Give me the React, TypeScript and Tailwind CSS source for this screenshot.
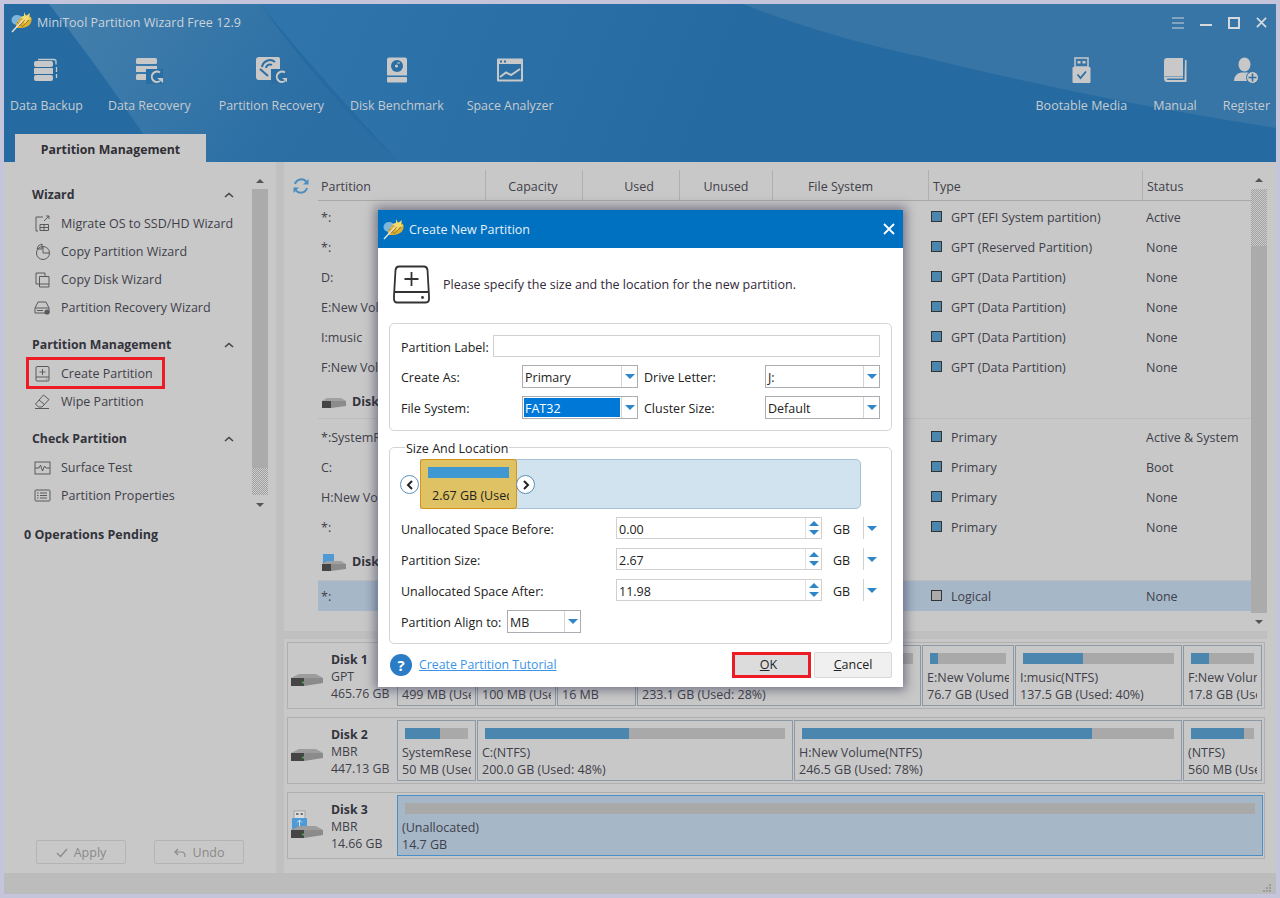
import React from "react";

const G = "#c8c8c8";

function Logo({ s = 22 }: { s?: number }) {
  return (
    <svg width={s} height={s} viewBox="0 0 22 22" className="shrink-0">
      <ellipse cx="6" cy="9" rx="5.5" ry="5" fill="#7cb6dc" />
      <path d="M5 17 C4 11 9 7 14 4 L20 6 C22 12 18 16 11 17 Z" fill="#dcae32" />
      <path d="M13 1 L15 5 L19 2 L18 7 L21 8 L16 9 L14 13 L12 8 L9 6 L13 5 Z" fill="#f2dc70" />
      <path d="M8 15 L14 9 M12 15 L18 9 M6 11 L12 16" stroke="#94721c" strokeWidth="0.8" />
      <path d="M1 21 L12 9" stroke="#e4e4dc" strokeWidth="1.4" />
    </svg>
  );
}

const refreshArrow = (x: number, y: number) => (
  <g>
    <path d={`M${x + 6} ${y - 4.5} A5.2 5.2 0 1 0 ${x + 6} ${y + 4}`} fill="none" stroke={G} strokeWidth="2" />
    <path d={`M${x + 3} ${y + 1} h6 v5 z`} fill={G} />
  </g>
);

const toolIcons: Record<string, React.ReactNode> = {
  backup: (
    <svg width="26" height="26" viewBox="0 0 26 26">
      <rect x="1" y="4" width="19" height="6" rx="2" fill={G} />
      <rect x="1" y="11" width="19" height="6" rx="0.5" fill={G} />
      <rect x="1" y="18" width="19" height="6" rx="2" fill={G} />
      <path d="M5 2.5 h16 q2 0 2 2 v3 M23.5 10 v5 M23.5 17 v4" fill="none" stroke={G} strokeWidth="1.3" />
    </svg>
  ),
  recovery: (
    <svg width="28" height="28" viewBox="0 0 28 28">
      <rect x="1" y="2" width="21" height="6" rx="1.5" fill={G} />
      <rect x="1" y="10" width="21" height="6" fill={G} />
      <rect x="1" y="18" width="21" height="6" rx="1.5" fill={G} />
      <rect x="11" y="13" width="17" height="15" fill="#2b6ea4" />
      {refreshArrow(19, 21)}
    </svg>
  ),
  partition: (
    <svg width="32" height="28" viewBox="0 0 32 28">
      <path d="M4 1 h19 q2 0 2 2 v21 h-21 q-3 0 -3 -3 v-17 q0 -3 3 -3z" fill={G} />
      <path d="M7 11 A8 8 0 0 1 20 6" fill="none" stroke="#2b6ea4" strokeWidth="2" />
      <path d="M11 12 A4 4 0 0 1 17 9" fill="none" stroke="#2b6ea4" strokeWidth="2" />
      <path d="M5 13 l8 7" stroke="#2b6ea4" strokeWidth="2" />
      <rect x="16" y="13" width="16" height="15" fill="#2b6ea4" />
      {refreshArrow(24, 21)}
    </svg>
  ),
  benchmark: (
    <svg width="20" height="26" viewBox="0 0 20 26">
      <path d="M2 0.5 h16 q2 0 2 2 v16 h-20 v-16 q0 -2 2 -2z" fill={G} />
      <circle cx="10" cy="9" r="6" fill="#2b6ea4" />
      <circle cx="9.5" cy="9" r="1.6" fill={G} />
      <path d="M10 6 l3 0" stroke={G} strokeWidth="1" />
      <rect x="0" y="20" width="20" height="5.5" rx="1" fill={G} />
    </svg>
  ),
  space: (
    <svg width="26" height="24" viewBox="0 0 26 24">
      <rect x="0" y="0.5" width="26" height="23" rx="1" fill={G} />
      <rect x="2" y="6" width="22" height="15.5" fill="#2b6ea4" />
      <rect x="3" y="2.5" width="2" height="2" fill="#2b6ea4" />
      <rect x="7" y="2.5" width="2" height="2" fill="#2b6ea4" />
      <path d="M3 19 L9 14.5 L14 17 L23 11" fill="none" stroke={G} strokeWidth="2" />
    </svg>
  ),
  boot: (
    <svg width="19" height="27" viewBox="0 0 19 27">
      <path d="M3 1 h13 v9 h-13 z" fill="none" stroke={G} strokeWidth="1.5" />
      <rect x="5.5" y="4" width="3" height="2.5" fill={G} />
      <rect x="10.5" y="4" width="3" height="2.5" fill={G} />
      <rect x="0.5" y="10" width="18" height="16" rx="1" fill={G} />
      <path d="M5.5 17.5 L8.5 21 L14 14.5" fill="none" stroke="#2b6ea4" strokeWidth="1.8" />
    </svg>
  ),
  manual: (
    <svg width="24" height="26" viewBox="0 0 24 26">
      <path d="M4 1 H20 V19 H4 Q1 19 1 21 V4 Q1 1 4 1Z" fill={G} />
      <path d="M22 3 h1.5 v22 H4 Q1 25 1 21 Q1 19.5 4 19.5 H20 V21.5 H5 Q3.5 21.5 3.5 22.3 Q3.5 23 5 23 H21.5 Z" fill={G} />
    </svg>
  ),
  register: (
    <svg width="25" height="27" viewBox="0 0 25 27">
      <ellipse cx="10.5" cy="7.5" rx="6" ry="7" fill={G} />
      <path d="M0 24 Q0 17 7 15.5 L14 15.5 Q18 16.5 20 18 L14 24 Z" fill={G} />
      <circle cx="18.5" cy="20.5" r="6" fill={G} stroke="#2f70a5" strokeWidth="1" />
      <path d="M18.5 16.5 V24.5 M14.5 20.5 H22.5" stroke="#2f70a5" strokeWidth="1.6" />
    </svg>
  ),
};

function Tool({ k, label, className, small }: { k: string; label: string; className: string; small?: boolean }) {
  return (
    <div className={`flex flex-col items-center ${className}`}>
      <div className="h-[30px] flex items-center justify-center">{toolIcons[k]}</div>
      <div className={`mt-[12px] leading-[18px] text-[#c6cbd0] whitespace-nowrap ${small ? "text-[12.4px]" : "text-[12.5px]"}`}>{label}</div>
    </div>
  );
}

const ic = "#5a5a5a";
const sideIcons: Record<string, React.ReactNode> = {
  migrate: (
    <>
      <path d="M9 2 H2 V16 H4 M12 1 l3 0 v3 M15 1 L10 6" fill="none" stroke={ic} />
      <path d="M6 9.5 H14.5 V15.5 H6 Z M10 9.5 V15.5 M6 12.5 H14.5" fill="none" stroke={ic} />
    </>
  ),
  copyPart: (
    <>
      <circle cx="9" cy="10" r="6.5" fill="none" stroke={ic} />
      <path d="M3 6 A6 6 0 0 1 8 1 V6 Z" fill="none" stroke={ic} />
      <path d="M9 4 V10 H15" fill="none" stroke={ic} />
    </>
  ),
  copyDisk: (
    <>
      <path d="M5 13 H2 V2 H11 V5" fill="none" stroke={ic} />
      <path d="M5.5 5.5 H15 V16 H5.5 Z M5.5 13 H15" fill="none" stroke={ic} />
    </>
  ),
  rec: (
    <>
      <path d="M4 3 H12 L15 9 V14 H1 V9 Z M1 9 H15" fill="none" stroke={ic} />
      <circle cx="13" cy="13" r="2.6" fill={ic} />
      <rect x="3" y="11" width="6" height="1" fill={ic} />
    </>
  ),
  create: (
    <>
      <path d="M3 1.5 H14 Q15 1.5 15 3 V15 Q15 16 14 16 H3 Q2 16 2 15 V3 Q2 1.5 3 1.5Z M2 12 H15" fill="none" stroke={ic} />
      <path d="M8.5 4 V10 M5.5 7 H11.5" stroke={ic} />
      <circle cx="12.7" cy="14" r="0.6" fill={ic} />
    </>
  ),
  wipe: (
    <>
      <path d="M9.5 2 L15 6.5 L8 14 H4.5 L1.5 11 Z M5 7 L10.5 11.5" fill="none" stroke={ic} />
      <path d="M1 15.5 H15" stroke={ic} />
    </>
  ),
  surface: (
    <>
      <rect x="1" y="3" width="15" height="12" fill="none" stroke={ic} />
      <path d="M1 9 H5 L6.5 6 L8.5 12 L10.5 7 L12 9 H16" fill="none" stroke={ic} />
    </>
  ),
  props: (
    <>
      <rect x="1" y="3" width="15" height="11" rx="1" fill="none" stroke={ic} />
      <path d="M6 6 H13 M6 8.5 H13 M6 11 H13 M3 6 H4.5 M3 8.5 H4.5 M3 11 H4.5" stroke={ic} />
    </>
  ),
};

function SideItem({ icon, label, red }: { icon: string; label: string; red?: boolean }) {
  return (
    <div className="relative h-[28px] flex items-center pl-[30px] text-[12.5px] text-[#3f3f4a] whitespace-nowrap">
      <svg width="17" height="17" viewBox="0 0 17 17" className="shrink-0 mr-[10px] -mt-[2px]">
        {sideIcons[icon]}
      </svg>
      {label}
      {red && <div className="absolute left-[22px] top-[-3px] w-[139px] h-[32px] border-[3px] border-[#ed1c24]" />}
    </div>
  );
}

function SideHead({ label, className = "" }: { label: string; className?: string }) {
  return (
    <div className={`flex items-center justify-between pl-[28px] pr-[18px] h-[20px] text-[12.3px] font-bold text-[#33333c] ${className}`}>
      {label}
      <svg width="10" height="6" viewBox="0 0 10 6">
        <path d="M1 5 L5 1.5 L9 5" fill="none" stroke="#444" strokeWidth="1.6" />
      </svg>
    </div>
  );
}

const dither = {
  backgroundImage: "repeating-conic-gradient(#a0a0a0 0% 25%, #cccccc 0% 50%)",
  backgroundSize: "2px 2px",
};

function TriUp() {
  return <div className="w-0 h-0 border-x-[4px] border-x-transparent border-b-[4px] border-b-[#555]" />;
}
function TriDown() {
  return <div className="w-0 h-0 border-x-[4px] border-x-transparent border-t-[4px] border-t-[#555]" />;
}

type Row = { p: string; t: string; s: string };
const rows1: Row[] = [
  { p: "*:", t: "GPT (EFI System partition)", s: "Active" },
  { p: "*:", t: "GPT (Reserved Partition)", s: "None" },
  { p: "D:", t: "GPT (Data Partition)", s: "None" },
  { p: "E:New Volume", t: "GPT (Data Partition)", s: "None" },
  { p: "I:music", t: "GPT (Data Partition)", s: "None" },
  { p: "F:New Volume", t: "GPT (Data Partition)", s: "None" },
];
const rows2: Row[] = [
  { p: "*:SystemReserved", t: "Primary", s: "Active & System" },
  { p: "C:", t: "Primary", s: "Boot" },
  { p: "H:New Volume", t: "Primary", s: "None" },
  { p: "*:", t: "Primary", s: "None" },
];

function TableRow({ r, sel }: { r: Row; sel?: boolean }) {
  return (
    <div className={`h-[30px] flex items-center pt-[2px] text-[12.5px] text-[#40404a] whitespace-nowrap ${sel ? "bg-[#a6b7c8]" : ""}`}>
      <div className="w-[613px] pl-[3px]">{r.p}</div>
      <div className="w-[215px] flex items-center">
        <div className={`w-[11px] h-[11px] border border-[#333] mr-[9px] -mt-[3px] ${sel ? "bg-[#ababab]" : "bg-[#4a86ad]"}`} />
        {r.t}
      </div>
      <div>{r.s}</div>
    </div>
  );
}

function DiskIcon({ usb }: { usb?: boolean }) {
  return (
    <svg width="34" height="34" viewBox="0 0 34 34" className="shrink-0">
      {usb && (
        <g>
          <rect x="4" y="2" width="11" height="8" fill="#dcdcdc" stroke="#888" strokeWidth="0.6" />
          <rect x="6" y="4" width="2.5" height="2" fill="#777" />
          <rect x="10.5" y="4" width="2.5" height="2" fill="#777" />
          <rect x="2" y="9" width="15" height="13" rx="1" fill="#4d9ad6" />
          <path d="M9.5 11 V19 M7 13.5 L9.5 11 L12 13.5" stroke="#cfe6f6" strokeWidth="1" fill="none" />
        </g>
      )}
      <path d="M1 21 L9 17 H26 L33 21 Z" fill="#9d9d9d" />
      <path d="M1 21 H14 V29 H1 Z" fill="#454545" />
      <path d="M14 21 H33 V26 L14 29 Z" fill="#8b8b8b" />
      <circle cx="13" cy="25.5" r="1" fill="#4ec24e" />
    </svg>
  );
}

function Part({ w, pct, l1, l2, sel }: { w: string; pct: number; l1: string; l2: string; sel?: boolean }) {
  return (
    <div className={`${w} shrink-0 h-full overflow-hidden border ${sel ? "border-[#4a8fc7] bg-[#a6b7c8]" : "border-[#8d9aa6]"} px-[7px] pt-[7px] text-[12.5px] leading-[17px] text-[#40404a] whitespace-nowrap`}>
      <div className="h-[11px] bg-[#a9a9a9] mb-[5px]">
        <div className="h-full bg-[#4a86ad]" style={{ width: `${pct}%` }} />
      </div>
      <div className="-ml-[3px] -mr-[3px] mt-[5px] overflow-hidden">{l1}</div>
      <div className="-ml-[3px] -mr-[3px] overflow-hidden">{l2}</div>
    </div>
  );
}

function DiskRow({ name, kind, size, usb, children }: { name: string; kind: string; size: string; usb?: boolean; children: React.ReactNode }) {
  return (
    <div className="h-[67px] border border-[#b0b0b0] flex items-center pl-[2px] pr-[2px]">
      <div className="w-[107px] h-full flex items-center shrink-0">
        <div className={usb ? "" : "mb-[4px]"}>
          <DiskIcon usb={usb} />
        </div>
        <div className="ml-[7px] pt-[2px] text-[12.3px] leading-[17px] text-[#3f3f48] whitespace-nowrap">
          <div className="font-bold text-[#33333c]">{name}</div>
          <div>{kind}</div>
          <div>{size}</div>
        </div>
      </div>
      <div className="flex gap-[1px] h-[61px]">{children}</div>
    </div>
  );
}

function BlueDown() {
  return <div className="w-0 h-0 border-x-[5px] border-x-transparent border-t-[5px] border-t-[#2e86c8]" />;
}

function Select({ v, w, selected }: { v: string; w: string; selected?: boolean }) {
  return (
    <div className={`${w} h-[23px] border border-[#abadb3] bg-white flex items-stretch text-[12.5px] text-[#222]`}>
      <div className={`flex-1 flex items-center m-[1px] pl-[1px] pt-[4px] ${selected ? "bg-[#0078d7] text-white" : ""}`}>{v}</div>
      <div className="w-[16px] border-l border-[#d5d5d5] flex items-center justify-center">
        <BlueDown />
      </div>
    </div>
  );
}

function SizeRow({ label, v }: { label: string; v: string }) {
  return (
    <div className="flex items-center h-[22px] pl-[11px] text-[12.5px] text-[#222]">
      <div className="w-[215px] pt-[4px]">{label}</div>
      <div className="w-[206px] h-[22px] border border-[#d0d0d0] flex items-stretch">
        <div className="flex-1 flex items-center pl-[2px] pt-[4px]">{v}</div>
        <div className="w-[16px] border-l border-[#e0e0e0] flex flex-col items-center justify-center gap-[4px]">
          <div className="w-0 h-0 border-x-[5px] border-x-transparent border-b-[5px] border-b-[#2e86c8]" />
          <div className="w-0 h-0 border-x-[5px] border-x-transparent border-t-[5px] border-t-[#2e86c8]" />
        </div>
      </div>
      <div className="ml-[11px] w-[30px] pt-[4px]">GB</div>
      <div className="h-[22px] border-l border-[#d0d0d0] w-[16px] flex items-center justify-center">
        <BlueDown />
      </div>
    </div>
  );
}

function Circle({ dir }: { dir: "l" | "r" }) {
  return (
    <div className={`absolute top-[15px] w-[19px] h-[19px] rounded-full bg-white border border-[#5d8fb5] flex items-center justify-center ${dir === "l" ? "left-[-21px]" : "left-[95px]"}`}>
      <svg width="8" height="10" viewBox="0 0 8 10">
        <path d={dir === "l" ? "M6 1 L2 5 L6 9" : "M2 1 L6 5 L2 9"} fill="none" stroke="#222" strokeWidth="2" />
      </svg>
    </div>
  );
}

function Dialog() {
  return (
    <div className="absolute left-[378px] top-[210px] w-[525px] h-[477px] bg-white shadow-[0_0_10px_3px_rgba(50,50,80,0.55)] flex flex-col">
      <div className="h-[38px] bg-[#0071c1] flex items-center pl-[5px] pr-[8px] text-[12.5px] text-[#e6f0f8]">
        <Logo />
        <span className="ml-[4px] pt-[2px]">Create New Partition</span>
        <svg width="12" height="12" viewBox="0 0 12 12" className="ml-auto">
          <path d="M1 1 L11 11 M11 1 L1 11" stroke="#fff" strokeWidth="1.8" />
        </svg>
      </div>
      <div className="h-[75px] flex items-center pl-[15px] pb-[2px] text-[12.5px] text-[#33283a]">
        <svg width="37" height="39" viewBox="0 0 37 39" className="mt-[-1px]">
          <path d="M6 1.5 H31 Q34 1.5 34.5 5 L36 31 V34 Q36 37.5 33 37.5 H4 Q1 37.5 1 34 V31 L2.5 5 Q3 1.5 6 1.5Z M1 27 H36" fill="none" stroke="#333" strokeWidth="1.8" />
          <path d="M18.5 7 V21 M11.5 14 H25.5" stroke="#333" strokeWidth="1.8" />
          <circle cx="29.5" cy="32.5" r="1.4" fill="#333" />
        </svg>
        <span className="ml-[13px] pt-[2px]">Please specify the size and the location for the new partition.</span>
      </div>
      <div className="mx-[11px] h-[108px] border border-[#d4d4d4] rounded-[5px] pt-[11px] pl-[11px] text-[12.5px] text-[#222]">
        <div className="flex items-center h-[22px]">
          <div className="w-[92px] whitespace-nowrap pt-[4px]">Partition Label:</div>
          <div className="w-[387px] h-[22px] border border-[#d0d0d0]" />
        </div>
        <div className="flex items-center mt-[8px]">
          <div className="w-[121px] pt-[4px]">Create As:</div>
          <Select v="Primary" w="w-[116px]" />
          <div className="w-[127px] pl-[6px] pt-[4px]">Drive Letter:</div>
          <Select v="J:" w="w-[115px]" />
        </div>
        <div className="flex items-center mt-[8px]">
          <div className="w-[121px] pt-[4px]">File System:</div>
          <Select v="FAT32" w="w-[116px]" selected />
          <div className="w-[127px] pl-[6px] pt-[4px]">Cluster Size:</div>
          <Select v="Default" w="w-[115px]" />
        </div>
      </div>
      <fieldset className="mx-[11px] mt-[6px] h-[207px] border border-[#d4d4d4] rounded-[5px]">
        <legend className="ml-[15px] px-[1px] pt-[3px] text-[12.5px] leading-[18px] text-[#222]">Size And Location</legend>
        <div className="ml-[30px] mt-[1px] w-[441px] h-[50px] bg-[#d0e3ef] border border-[#a9c1d2] rounded-r-[5px] relative">
          <div className="absolute left-[-1px] top-[-1px] w-[97px] h-[50px] bg-[#dfc264] border border-[#d4941a] rounded-[3px] overflow-hidden pl-[11px] pt-[26px] text-[12.5px] leading-[20px] text-[#222] whitespace-nowrap">
            <div className="absolute left-[7px] top-[7px] w-[81px] h-[11px] bg-[#3f98d2]" />
            <div className="w-[77px] overflow-hidden">2.67 GB (Used</div>
          </div>
          <Circle dir="l" />
          <Circle dir="r" />
        </div>
        <div className="mt-[8px] flex flex-col gap-[9px]">
          <SizeRow label="Unallocated Space Before:" v="0.00" />
          <SizeRow label="Partition Size:" v="2.67" />
          <SizeRow label="Unallocated Space After:" v="11.98" />
          <div className="flex items-center pl-[11px] text-[12.5px] text-[#222]">
            <div className="w-[106px] pt-[4px]">Partition Align to:</div>
            <Select v="MB" w="w-[74px]" />
          </div>
        </div>
      </fieldset>
      <div className="mt-[8px] ml-[12px] mr-[11px] flex items-center h-[26px] text-[12.5px]">
        <div className="w-[22px] h-[22px] rounded-full bg-[#2b7cc4] text-white font-bold text-[15px] flex items-center justify-center">?</div>
        <span className="ml-[7px] text-[12.3px] text-[#3b94e8] underline">Create Partition Tutorial</span>
        <div className="ml-auto relative w-[79px] h-[26px] bg-[#dcdcdc] flex items-center justify-center pr-[6px] text-[#222]">
          <span><span className="underline">O</span>K</span>
          <div className="absolute inset-0 border-[3px] border-[#ed1c24]" />
        </div>
        <div className="ml-[3px] w-[78px] h-[26px] bg-[#f0f0f0] border border-[#d8d8d8] rounded-[2px] flex items-center justify-center text-[#222]">
          <span><span className="underline">C</span>ancel</span>
        </div>
      </div>
    </div>
  );
}

const headCols = [
  { l: "Partition", c: "w-[167px] pl-[3px] pt-[4px] flex items-center" },
  { l: "Capacity", c: "w-[97px] border-l border-[#b0b0b0] pt-[4px] pr-[2px] flex items-center justify-center" },
  { l: "Used", c: "w-[97px] border-l border-[#b0b0b0] pt-[4px] pl-[16px] flex items-center justify-center" },
  { l: "Unused", c: "w-[93px] border-l border-[#b0b0b0] pt-[4px] flex items-center justify-center" },
  { l: "File System", c: "w-[156px] border-l border-[#b0b0b0] pt-[4px] pr-[20px] flex items-center justify-center" },
  { l: "Type", c: "w-[214px] border-l border-[#b0b0b0] pt-[4px] pl-[4px] flex items-center" },
  { l: "Status", c: "w-[109px] border-l border-[#b0b0b0] pt-[4px] pl-[4px] flex items-center" },
];

export default function App() {
  return (
    <div
      className="relative w-[1280px] h-[898px] overflow-hidden bg-[#c8c8c8] border-[4px] border-[#c4c4da] flex flex-col"
      style={{ fontFamily: '"Open Sans", "Noto Sans", sans-serif' }}
    >
      {/* header */}
      <div className="relative h-[158px] bg-[#256ba1] shrink-0 overflow-hidden">
        <svg className="absolute inset-0" width="1272" height="158" viewBox="0 0 1272 158">
          <defs>
            <linearGradient id="a" gradientUnits="userSpaceOnUse" x1="60" y1="0" x2="280" y2="158">
              <stop offset="0" stopColor="#437fac" />
              <stop offset="1" stopColor="#2a6ea4" />
            </linearGradient>
            <linearGradient id="b" gradientUnits="userSpaceOnUse" x1="300" y1="0" x2="700" y2="160">
              <stop offset="0" stopColor="#2f74aa" />
              <stop offset="1" stopColor="#256ba1" />
            </linearGradient>
          </defs>
          <path d="M256 0 Q330 90 396 158 H1100 V0 Z" fill="url(#b)" />
          <path d="M45 0 Q100 70 158 158 H396 Q320 90 256 0 Z" fill="url(#a)" />
          <path d="M739 0 Q820 32 918 53 Q1100 98 1272 124 V0 Z" fill="#3675a6" />
        </svg>
        <div className="relative flex items-center h-[36px] pl-[7px] text-[12.5px] text-[#ccd3da]">
          <Logo />
          <span className="ml-[4px] pt-[3px]">MiniTool Partition Wizard Free 12.9</span>
          <div className="ml-auto flex items-center pr-[9px] mt-[1px]">
            <svg width="12" height="12" viewBox="0 0 12 12" className="mr-[16px]">
              <path d="M0 1 H12 M0 6 H12 M0 11 H12" stroke="#d0d5da" strokeWidth="1" />
            </svg>
            <svg width="12" height="12" viewBox="0 0 12 12" className="mr-[16px]">
              <path d="M0 8 H12" stroke="#d5d9de" strokeWidth="2" />
            </svg>
            <svg width="12" height="12" viewBox="0 0 12 12" className="mr-[16px]">
              <rect x="1" y="1" width="10" height="10" fill="none" stroke="#d5d9de" strokeWidth="2" />
            </svg>
            <svg width="11" height="11" viewBox="0 0 12 12">
              <path d="M1 1 L11 11 M11 1 L1 11" stroke="#d5d9de" strokeWidth="1.9" />
            </svg>
          </div>
        </div>
        <div className="relative flex items-start mt-[15px] pl-[6px] pr-[6px]">
          <Tool k="backup" label="Data Backup" className="" small />
          <Tool k="recovery" label="Data Recovery" className="ml-[25px]" small />
          <Tool k="partition" label="Partition Recovery" className="ml-[28px]" small />
          <Tool k="benchmark" label="Disk Benchmark" className="ml-[26px]" small />
          <Tool k="space" label="Space Analyzer" className="ml-[23px]" small />
          <Tool k="boot" label="Bootable Media" className="ml-auto" />
          <Tool k="manual" label="Manual" className="ml-[26px]" />
          <Tool k="register" label="Register" className="ml-[26px]" />
        </div>
        <div className="absolute left-[11px] bottom-0 w-[191px] h-[28px] bg-[#c8c8c8] flex items-center justify-center pt-[4px] text-[12.3px] font-bold text-[#2f2f35]">
          Partition Management
        </div>
      </div>

      {/* main */}
      <div className="flex-1 flex min-h-0">
        <div className="w-[272px] shrink-0 flex flex-col pb-[9px]">
          <div className="flex">
            <div className="w-[248px] pt-[17px]">
              <SideHead label="Wizard" className="mt-[6px]" />
              <div className="mt-[5px]">
                <SideItem icon="migrate" label="Migrate OS to SSD/HD Wizard" />
                <SideItem icon="copyPart" label="Copy Partition Wizard" />
                <SideItem icon="copyDisk" label="Copy Disk Wizard" />
                <SideItem icon="rec" label="Partition Recovery Wizard" />
              </div>
              <SideHead label="Partition Management" className="mt-[13px]" />
              <div className="mt-[5px]">
                <SideItem icon="create" label="Create Partition" red />
                <SideItem icon="wipe" label="Wipe Partition" />
              </div>
              <SideHead label="Check Partition" className="mt-[13px]" />
              <div className="mt-[5px]">
                <SideItem icon="surface" label="Surface Test" />
                <SideItem icon="props" label="Partition Properties" />
              </div>
            </div>
            <div className="w-[16px] pt-[10px] flex flex-col items-center">
              <div className="h-[17px] flex items-center"><TriUp /></div>
              <div className="w-full h-[279px] bg-[#ababab]" />
              <div className="w-full h-[27px]" style={dither} />
              <div className="h-[20px] flex items-center"><TriDown /></div>
            </div>
          </div>
          <div className="mt-[11px] pl-[20px] text-[12.5px] font-bold text-[#33333c]">0 Operations Pending</div>
          <div className="mt-auto flex pl-[32px] gap-[28px] text-[12.5px] text-[#8a8a8a]">
            <div className="w-[90px] h-[24px] border border-[#b4b4b4] rounded-[2px] flex items-center justify-center pt-[2px]">
              <svg width="12" height="10" viewBox="0 0 12 10" className="mr-[6px]"><path d="M1 5 L4.5 8.5 L11 1" fill="none" stroke="#8a8a8a" strokeWidth="1.2" /></svg>
              Apply
            </div>
            <div className="w-[90px] h-[24px] border border-[#b4b4b4] rounded-[2px] flex items-center justify-center pt-[2px]">
              <svg width="12" height="10" viewBox="0 0 12 10" className="mr-[7px]"><path d="M4 1 L1 4 L4 7 M1 4 H8 Q11 4 11 9" fill="none" stroke="#8a8a8a" strokeWidth="1.2" /></svg>
              Undo
            </div>
          </div>
        </div>
        <div className="w-[8px] shrink-0 bg-[#c0c0c0]" />
        <div className="flex-1 min-w-0 flex flex-col">
          <div className="flex h-[469px] pr-[9px]">
            <div className="w-[34px] pt-[15px] pl-[8px] shrink-0">
              <svg width="18" height="18" viewBox="0 0 18 18">
                <path d="M3 7 A6.5 6.5 0 0 1 14.5 5 M15 11 A6.5 6.5 0 0 1 3.5 13" fill="none" stroke="#4a8dc0" strokeWidth="2" />
                <path d="M16.5 2 V7.5 H11 Z M1.5 16 V10.5 H7 Z" fill="#4a8dc0" />
              </svg>
            </div>
            <div className="w-[933px] shrink-0 pt-[8px]">
              <div className="flex h-[31px] border-b border-[#a9a9a9] text-[12.5px] text-[#40404a]">
                {headCols.map((h) => (
                  <div key={h.l} className={h.c}>{h.l}</div>
                ))}
              </div>
              <div className="mt-[1px]">
                {rows1.map((r, i) => <TableRow key={i} r={r} />)}
              </div>
              <div className="h-[37px] border-b border-[#bdbdbd] flex items-center pl-[3px] pt-[5px] text-[12.5px] font-bold text-[#33333c]">
                <svg width="26" height="14" viewBox="0 0 26 14"><path d="M1 5 L6 2 H20 L25 5 Z" fill="#a0a0a0" /><path d="M1 5 H10 V12 H1Z" fill="#444" /><path d="M10 5 H25 V10 L10 12Z" fill="#8b8b8b" /></svg>
                <span className="ml-[5px]">Disk 2</span>
              </div>
              <div className="mt-[3px]">
                {rows2.map((r, i) => <TableRow key={i} r={r} />)}
              </div>
              <div className="h-[39px] border-b border-[#bdbdbd] flex items-center pl-[3px] pt-[3px] text-[12.5px] font-bold text-[#33333c]">
                <svg width="26" height="20" viewBox="0 0 26 20"><rect x="2" y="1" width="11" height="11" fill="#4d9ad6" /><path d="M1 11 L6 8 H20 L25 11 Z" fill="#a0a0a0" /><path d="M1 11 H10 V18 H1Z" fill="#444" /><path d="M10 11 H25 V16 L10 18Z" fill="#8b8b8b" /></svg>
                <span className="ml-[5px]">Disk 3</span>
              </div>
              <TableRow r={{ p: "*:", t: "Logical", s: "None" }} sel />
            </div>
            <div className="w-[16px] shrink-0 flex flex-col items-center pt-[8px]">
              <div className="h-[19px] flex items-center"><TriUp /></div>
              <div className="w-full h-[57px]" style={dither} />
              <div className="w-full h-[367px] bg-[#ababab]" />
              <div className="h-[18px] flex items-center"><TriDown /></div>
            </div>
          </div>
          <div className="h-[8px] bg-[#c0c0c0] mr-[9px] shrink-0" />
          <div className="mt-[3px] ml-[3px] mr-[11px] flex flex-col gap-[8px]">
            <DiskRow name="Disk 1" kind="GPT" size="465.76 GB">
              <Part w="w-[79px]" pct={30} l1="(FAT32)" l2="499 MB (Used" />
              <Part w="w-[79px]" pct={30} l1="(FAT32)" l2="100 MB (Used" />
              <Part w="w-[79px]" pct={100} l1="(Other)" l2="16 MB" />
              <Part w="w-[284px]" pct={28} l1="D:(NTFS)" l2="233.1 GB (Used: 28%)" />
              <Part w="w-[92px]" pct={10} l1="E:New Volume(NTFS)" l2="76.7 GB (Used: 10%)" />
              <Part w="w-[167px]" pct={40} l1="I:music(NTFS)" l2="137.5 GB (Used: 40%)" />
              <Part w="w-[79px]" pct={28} l1="F:New Volume(NTFS)" l2="17.8 GB (Used" />
            </DiskRow>
            <DiskRow name="Disk 2" kind="MBR" size="447.13 GB">
              <Part w="w-[79px]" pct={55} l1="SystemReserved" l2="50 MB (Used" />
              <Part w="w-[316px]" pct={48} l1="C:(NTFS)" l2="200.0 GB (Used: 48%)" />
              <Part w="w-[388px]" pct={78} l1="H:New Volume(NTFS)" l2="246.5 GB (Used: 78%)" />
              <Part w="w-[79px]" pct={84} l1="(NTFS)" l2="560 MB (Used" />
            </DiskRow>
            <DiskRow name="Disk 3" kind="MBR" size="14.66 GB" usb>
              <Part w="w-[866px]" pct={0} l1="(Unallocated)" l2="14.7 GB" sel />
            </DiskRow>
          </div>
        </div>
      </div>

      {/* status bar */}
      <div className="relative h-[21px] bg-[#bcbcbc] shrink-0">
        <svg width="10" height="10" viewBox="0 0 10 10" className="absolute right-[4px] bottom-[1px]">
          <g fill="#9a9a9a">
            <rect x="7" y="1" width="2" height="2" /><rect x="4" y="4" width="2" height="2" /><rect x="7" y="4" width="2" height="2" />
            <rect x="1" y="7" width="2" height="2" /><rect x="4" y="7" width="2" height="2" /><rect x="7" y="7" width="2" height="2" />
          </g>
        </svg>
      </div>

      <div className="absolute -left-[4px] -top-[4px]">
        <Dialog />
      </div>
    </div>
  );
}
